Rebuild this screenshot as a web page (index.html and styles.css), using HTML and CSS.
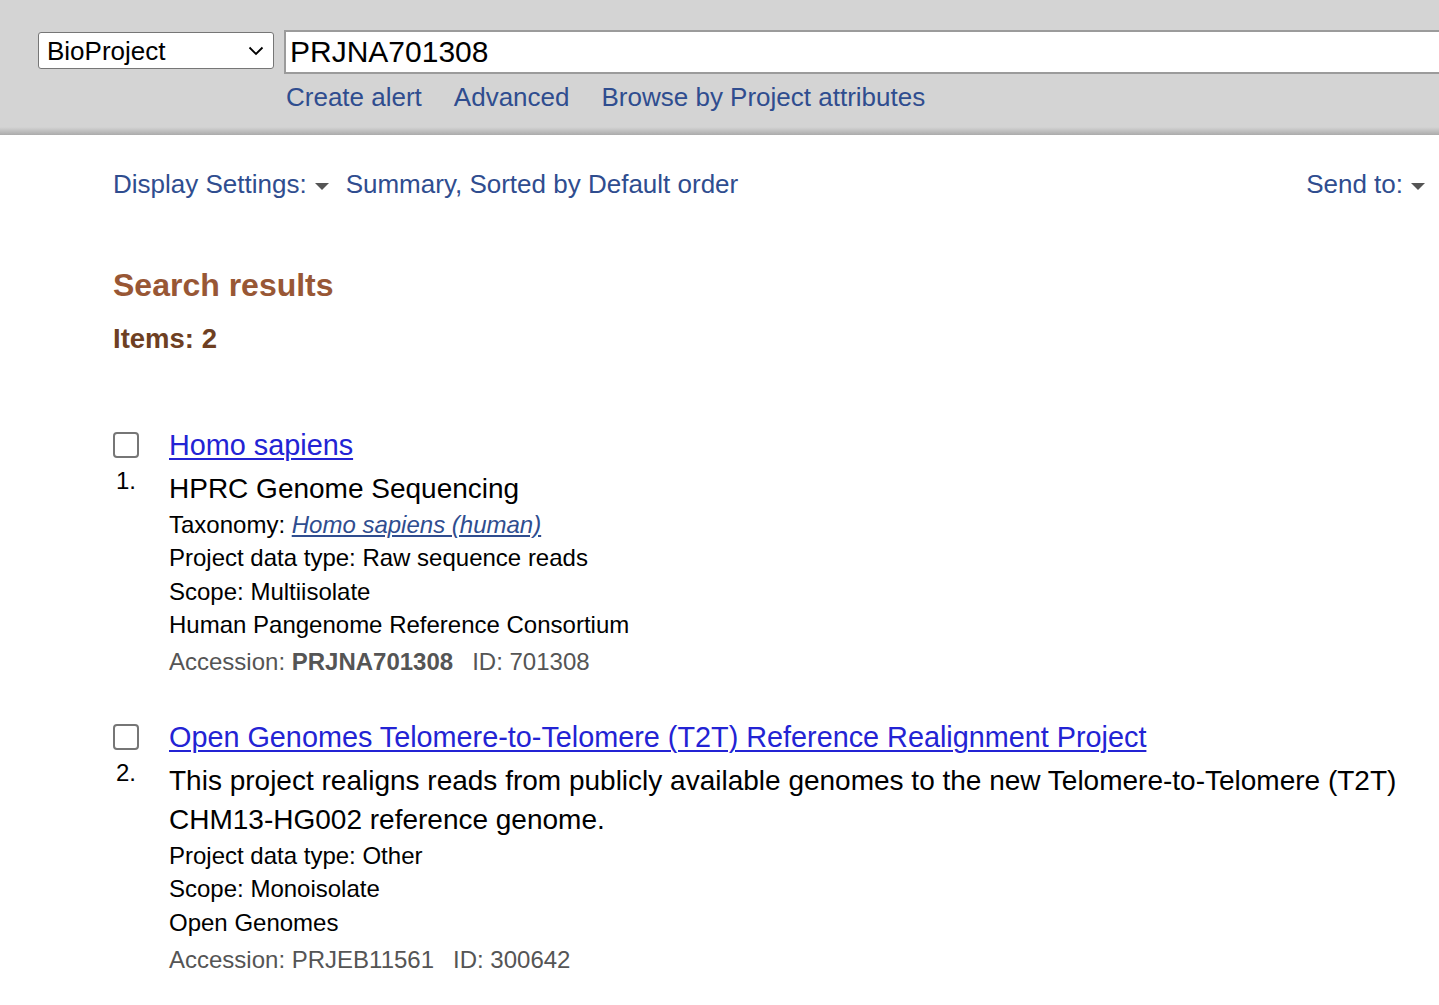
FILE: index.html
```html
<!DOCTYPE html>
<html lang="en">
<head>
<meta charset="utf-8">
<title>BioProject search results</title>
<link rel="stylesheet" href="styles.css">
</head>
<body>
<header class="searchbar">
  <div class="search-row">
    <div class="db-select">
      <span class="db-name">BioProject</span>
      <svg class="chev" width="16" height="10" viewBox="0 0 16 10"><path d="M1.5 1.5 L8 8 L14.5 1.5" fill="none" stroke="#000" stroke-width="1.8"/></svg>
    </div>
    <div class="term-box">PRJNA701308</div>
  </div>
  <nav class="search-links">
    <a href="#">Create alert</a>
    <a href="#">Advanced</a>
    <a href="#">Browse by Project attributes</a>
  </nav>
</header>
<div class="shade"></div>

<main class="content">
  <div class="display-bar">
    <div class="display-left">
      <a class="nav-link" href="#">Display Settings:</a>
      <span class="tri"></span>
      <a class="nav-link summary" href="#">Summary, Sorted by Default order</a>
    </div>
    <div class="display-right">
      <a class="nav-link" href="#">Send to:</a>
      <span class="tri"></span>
    </div>
  </div>

  <h1 class="results-title">Search results</h1>
  <h2 class="items-count">Items: 2</h2>

  <div class="result">
    <div class="result-side">
      <input type="checkbox" class="cb">
      <span class="num">1.</span>
    </div>
    <div class="result-body">
      <a class="result-title" href="#">Homo sapiens</a>
      <p class="result-desc">HPRC Genome Sequencing</p>
      <p class="line">Taxonomy: <a class="tax" href="#">Homo sapiens (human)</a></p>
      <p class="line">Project data type: Raw sequence reads</p>
      <p class="line">Scope: Multiisolate</p>
      <p class="line">Human Pangenome Reference Consortium</p>
      <p class="acc">Accession: <b>PRJNA701308</b><span class="id">ID: 701308</span></p>
    </div>
  </div>

  <div class="result">
    <div class="result-side">
      <input type="checkbox" class="cb">
      <span class="num">2.</span>
    </div>
    <div class="result-body">
      <a class="result-title" href="#">Open Genomes Telomere-to-Telomere (T2T) Reference Realignment Project</a>
      <p class="result-desc">This project realigns reads from publicly available genomes to the new Telomere-to-Telomere (T2T) CHM13-HG002 reference genome.</p>
      <p class="line">Project data type: Other</p>
      <p class="line">Scope: Monoisolate</p>
      <p class="line">Open Genomes</p>
      <p class="acc">Accession: PRJEB11561<span class="id">ID: 300642</span></p>
    </div>
  </div>
</main>
</body>
</html>
```
FILE: styles.css
```css
html, body {
  margin: 0;
  padding: 0;
  background: #fff;
  overflow-x: hidden;
}
body {
  font-family: "Liberation Sans", Arial, sans-serif;
  color: #000;
}
a { text-decoration: none; }

.searchbar {
  background: #d4d4d4;
  padding: 30px 0 0 38px;
  height: 97px;
  overflow: hidden;
  box-sizing: content-box;
}
.search-row {
  display: flex;
  align-items: flex-start;
  gap: 10px;
}
.db-select {
  flex: none;
  margin-top: 2px;
  width: 236px;
  height: 37px;
  box-sizing: border-box;
  border: 1px solid #767676;
  border-radius: 3px;
  background: #fff;
  display: flex;
  align-items: center;
  justify-content: space-between;
  padding: 0 9px 0 8px;
}
.db-name {
  font-size: 26px;
  line-height: 30px;
}
.chev { display: block; margin-top: 1px; }
.term-box {
  width: 1300px;
  height: 44px;
  box-sizing: border-box;
  border: 2px solid #9b9b9b;
  border-right: none;
  background: #fff;
  font-size: 30px;
  line-height: 40px;
  padding-left: 4px;
  flex: none;
}
.search-links {
  display: flex;
  gap: 32px;
  margin-left: 248px;
  margin-top: 8px;
}
.search-links a {
  color: #2f4d8f;
  font-size: 26px;
  line-height: 30px;
}
.shade {
  height: 8px;
  background: linear-gradient(#d4d4d4, #ababab);
}

.content {
  padding: 0 14px 0 113px;
}
.display-bar {
  display: flex;
  justify-content: space-between;
  align-items: center;
  margin-top: 34px;
  height: 30px;
}
.display-left, .display-right {
  display: flex;
  align-items: center;
}
.nav-link {
  color: #2f4d8f;
  font-size: 26px;
  line-height: 30px;
}
.tri {
  width: 0;
  height: 0;
  border-left: 7px solid transparent;
  border-right: 7px solid transparent;
  border-top: 7px solid #555;
  margin: 4px 0 0 8px;
}
.summary { margin-left: 17px; }

.results-title {
  margin: 68px 0 0;
  font-size: 32px;
  line-height: 36px;
  font-weight: bold;
  color: #985735;
}
.items-count {
  margin: 20px 0 0;
  font-size: 27.5px;
  line-height: 32px;
  font-weight: bold;
  color: #6e3f22;
}

.result {
  display: flex;
  margin-top: 73px;
}
.result + .result { margin-top: 42px; }
.result-side {
  width: 56px;
  flex: none;
  display: flex;
  flex-direction: column;
  align-items: flex-start;
}
.cb {
  appearance: none;
  -webkit-appearance: none;
  width: 26px;
  height: 26px;
  margin: 4px 0 0 0;
  border: 2px solid #767676;
  border-radius: 4px;
  background: #fff;
  box-sizing: border-box;
}
.num {
  font-size: 24px;
  line-height: 30px;
  margin: 8px 0 0 3px;
}
.result-body { flex: 1; }
.result-title {
  display: block;
  color: #2323d4;
  text-decoration: underline;
  text-decoration-thickness: 2px;
  text-underline-offset: 3px;
  font-size: 28.8px;
  line-height: 34px;
}
.result-desc {
  margin: 7px 0 0;
  font-size: 28px;
  line-height: 39px;
}
.line {
  margin: 0;
  font-size: 24px;
  line-height: 33.3px;
}
.tax {
  color: #2f4d8f;
  font-style: italic;
  text-decoration: underline;
}
.acc {
  margin: 4px 0 0;
  font-size: 24px;
  line-height: 33px;
  color: #555;
}
.acc b { color: #555; }
.id { margin-left: 19px; }
```
